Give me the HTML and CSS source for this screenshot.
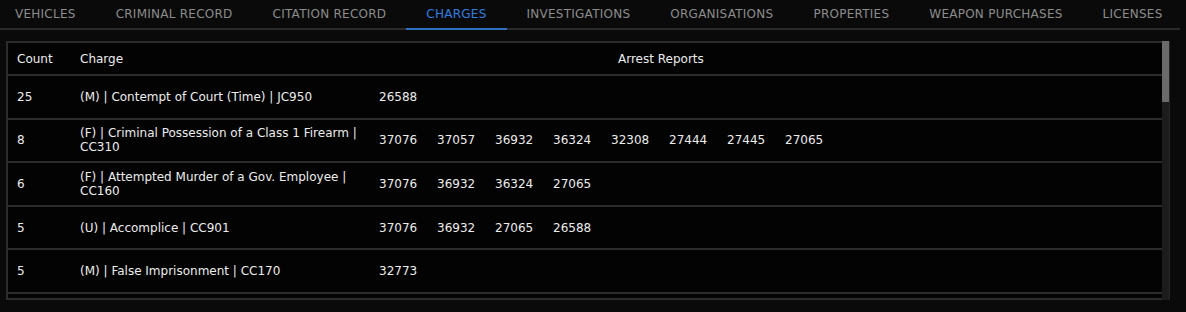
FILE: index.html
```html
<!DOCTYPE html>
<html lang="en">

<head>
    <meta charset="UTF-8">
    <meta name="viewport" content="width=device-width, initial-scale=1.0">
    <title>Charges</title>
    <link rel="stylesheet" href="styles.css">
</head>

<body>
    <!-- Record Tabs -->
    <nav class="tabs">
        <a class="tab">VEHICLES</a>
        <a class="tab">CRIMINAL RECORD</a>
        <a class="tab">CITATION RECORD</a>
        <a class="tab active">CHARGES</a>
        <a class="tab">INVESTIGATIONS</a>
        <a class="tab">ORGANISATIONS</a>
        <a class="tab">PROPERTIES</a>
        <a class="tab">WEAPON PURCHASES</a>
        <a class="tab">LICENSES</a>
    </nav>

    <!-- Charges Table -->
    <div class="records">
        <div class="table-wrap">
            <table class="charges">
                <thead>
                    <tr>
                        <th class="col-count">Count</th>
                        <th class="col-charge">Charge</th>
                        <th class="col-reports">Arrest Reports</th>
                    </tr>
                </thead>
                <tbody>
                    <tr>
                        <td>25</td>
                        <td>(M) | Contempt of Court (Time) | JC950</td>
                        <td><div class="reports"><span>26588</span></div></td>
                    </tr>
                    <tr>
                        <td>8</td>
                        <td>(F) | Criminal Possession of a Class 1 Firearm | CC310</td>
                        <td><div class="reports"><span>37076</span><span>37057</span><span>36932</span><span>36324</span><span>32308</span><span>27444</span><span>27445</span><span>27065</span></div></td>
                    </tr>
                    <tr>
                        <td>6</td>
                        <td>(F) | Attempted Murder of a Gov. Employee | CC160</td>
                        <td><div class="reports"><span>37076</span><span>36932</span><span>36324</span><span>27065</span></div></td>
                    </tr>
                    <tr>
                        <td>5</td>
                        <td>(U) | Accomplice | CC901</td>
                        <td><div class="reports"><span>37076</span><span>36932</span><span>27065</span><span>26588</span></div></td>
                    </tr>
                    <tr>
                        <td>5</td>
                        <td>(M) | False Imprisonment | CC170</td>
                        <td><div class="reports"><span>32773</span></div></td>
                    </tr>
                </tbody>
            </table>
        </div>

        <!-- Scrollbar -->
        <div class="scrollbar">
            <div class="scrollbar-thumb"></div>
        </div>
    </div>
</body>

</html>
```

FILE: styles.css
```css
/* General Styling */
body {
    margin: 0;
    padding: 0;
    font-family: 'DejaVu Sans', 'Liberation Sans', sans-serif;
    font-size: 12px;
    background-color: #0a0a0a;
    color: #ececec;
    overflow: hidden;
}

/* Tabs */
.tabs {
    display: flex;
    width: 1185px;
    height: 28px;
    margin-left: -5px;
    border-bottom: 2px solid #2a2a2a;
}

.tab {
    display: flex;
    flex-shrink: 0;
    align-items: center;
    padding: 0 20px;
    color: #8c8c8c;
    font-size: 12px;
    letter-spacing: 0.25px;
    white-space: nowrap;
    cursor: pointer;
    border-bottom: 2px solid transparent;
    margin-bottom: -2px;
}

.tab.active {
    color: #2f7ee0;
    border-bottom-color: #2f6fbf;
}

/* Charges table container */
.records {
    display: flex;
    width: 1162px;
    height: 255px;
    margin: 11px 0 0 6px;
    border: 2px solid #2c2c2c;
    border-right: none;
    background-color: #030303;
}

.table-wrap {
    flex: 1;
    overflow: hidden;
}

/* Scrollbar */
.scrollbar {
    width: 7px;
    margin-top: -2px;
    margin-bottom: -2px;
    background-color: #1c1c1c;
    border-right: 1px solid #262626;
}

.scrollbar-thumb {
    height: 61px;
    background-color: #6a6a6a;
}

/* Table */
.charges {
    width: 100%;
    border-collapse: collapse;
}

.charges th {
    height: 31px;
    padding: 0;
    font-weight: normal;
    text-align: left;
    border-bottom: 2px solid #2c2c2c;
}

.charges td {
    height: 41.6px;
    padding: 0;
    line-height: 14px;
    border-bottom: 2px solid #2c2c2c;
}

.col-count {
    width: 52px;
}

.charges th:first-child,
.charges td:first-child {
    padding-left: 9px;
}

.col-charge {
    width: 290px;
}

.charges th:nth-child(2),
.charges td:nth-child(2) {
    padding-left: 11px;
}

.charges th.col-reports {
    padding-left: 248px;
}

.charges td:nth-child(3) {
    padding-left: 9px;
}

.reports {
    display: flex;
    gap: 20px;
}

.reports span {
    width: 38px;
}
```
